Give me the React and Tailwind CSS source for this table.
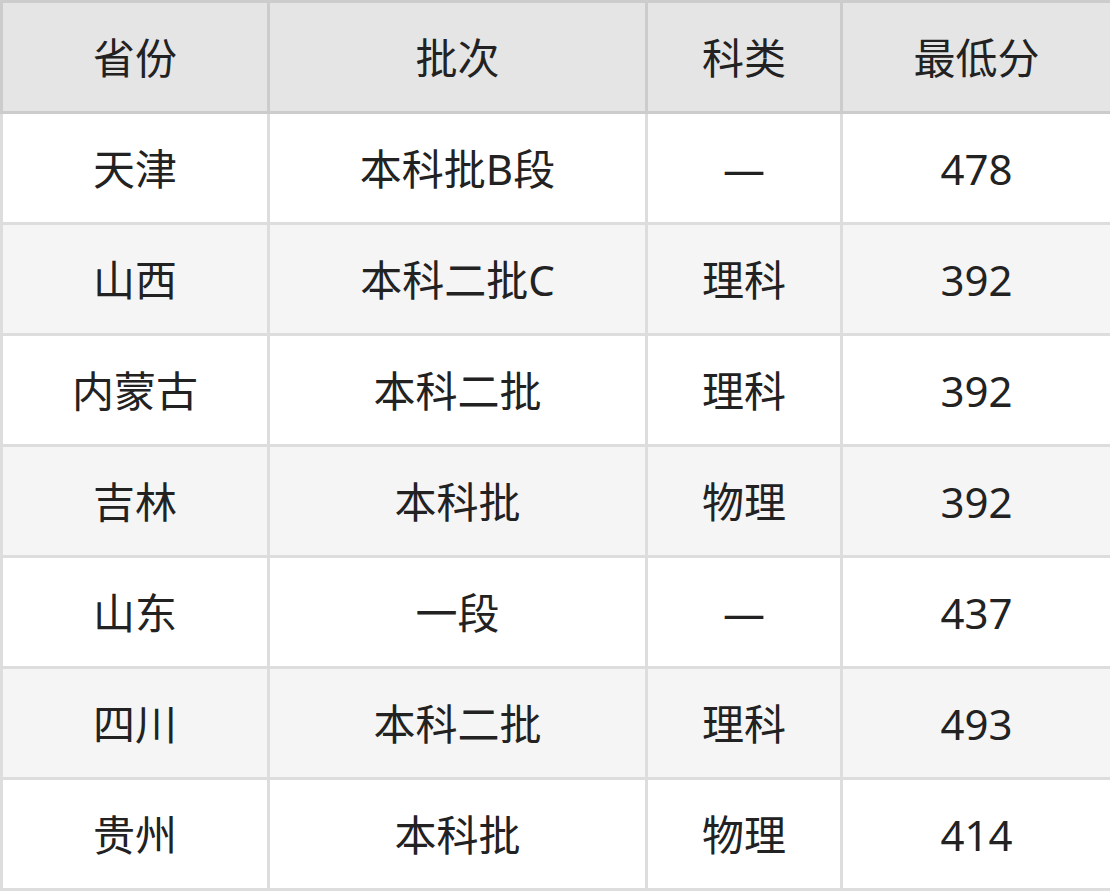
const rows = [
  ['天津', '本科批B段', '—', '478'],
  ['山西', '本科二批C', '理科', '392'],
  ['内蒙古', '本科二批', '理科', '392'],
  ['吉林', '本科批', '物理', '392'],
  ['山东', '一段', '—', '437'],
  ['四川', '本科二批', '理科', '493'],
  ['贵州', '本科批', '物理', '414'],
];

const widths = ['w-[267px]', 'w-[378px]', 'w-[195px]', 'w-[270px]'];

export default function App() {
  return (
    <div className="w-[1110px] h-[891px] bg-white">
      <table
        className="w-[1110px] border-collapse table-fixed text-[#222] text-[42px]"
        style={{ fontFamily: '"Noto Sans", "Noto Sans CJK SC", sans-serif' }}
      >
        <thead>
          <tr className="bg-[#e5e5e5] h-[111px]">
            {['省份', '批次', '科类', '最低分'].map((h, i) => (
              <th key={h} className={`${widths[i]} border-[3px] border-[#cccccc] font-normal text-center p-0`}>
                {h}
              </th>
            ))}
          </tr>
        </thead>
        <tbody>
          {rows.map((r, idx) => (
            <tr key={idx} className={`h-[111px] ${idx % 2 === 1 ? 'bg-[#f5f5f5]' : 'bg-white'}`}>
              {r.map((c, i) => (
                <td key={i} className="border-[3px] border-[#dddddd] text-center p-0">
                  {c}
                </td>
              ))}
            </tr>
          ))}
        </tbody>
      </table>
    </div>
  );
}
